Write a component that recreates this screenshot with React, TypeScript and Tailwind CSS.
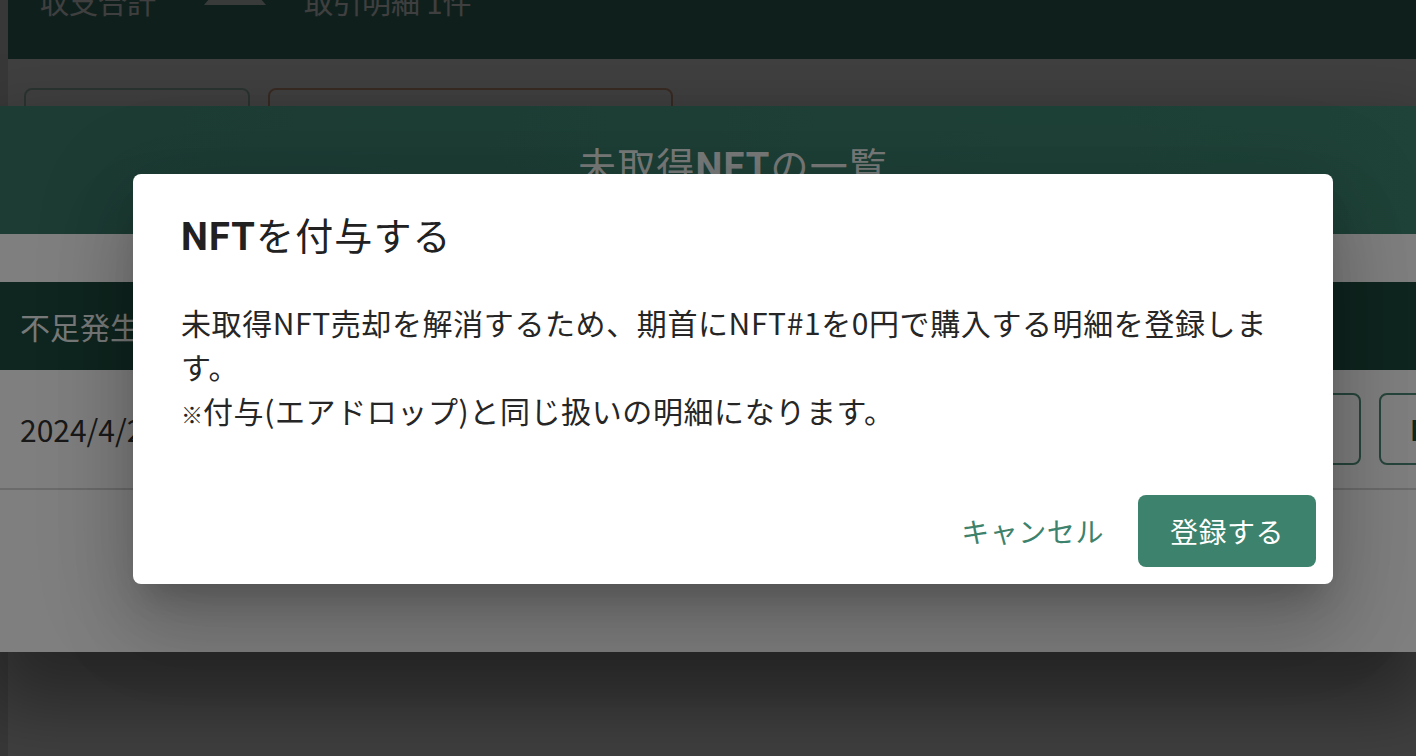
import React from 'react';

const jp = "font-['Noto_Sans_CJK_JP',sans-serif]";
const latinBold = "font-['Roboto','Noto_Sans_CJK_JP',sans-serif] font-bold";

const BasePage: React.FC = () => (
  <div className="flex h-full w-full bg-white">
    <div className="w-[8px] shrink-0 bg-[#e0e0e0]" />
    <div className="flex-1">
      <div className="h-[59px] bg-[#3e8070] overflow-hidden">
        <div className="flex items-start -mt-[14px] text-[29px] leading-[30px] text-white">
          <span className="ml-[32px]">収支合計</span>
          <svg width="62" height="36" viewBox="0 0 62 36" className="ml-[48px] -mt-[17px]">
            <path d="M31 0 L62 36 L0 36 Z" fill="#ffffff" fillOpacity="0.85" />
          </svg>
          <span className="ml-[38px]">取引明細 1件</span>
        </div>
      </div>
      <div className="flex gap-[18px] pl-[16px] pt-[29px]">
        <div className="h-[80px] w-[226px] rounded-[8px] border-2 border-[#a8cfc2]" />
        <div className="h-[80px] w-[405px] rounded-[8px] border-2 border-[#e0a889]" />
      </div>
    </div>
  </div>
);

const ListSheet: React.FC = () => (
  <div className="flex h-[546px] w-full flex-col bg-white shadow-[0_40px_70px_12px_rgba(0,0,0,0.4)]">
    <div className="flex h-[128px] shrink-0 items-center justify-center bg-gradient-to-r from-[#397868] to-[#3e8671] pb-[10px] pl-[50px]">
      <span className="text-[38px] tracking-[0.03em] text-white/95">
        未取得<span className={latinBold}>NFT</span>の一覧
      </span>
    </div>
    <div className="pt-[48px]">
      <div className="flex h-[88px] items-center bg-[#1f4a3e] px-[20px] text-[30px] text-white/95">
        不足発生数量
      </div>
      <div className="flex h-[120px] items-center border-b-2 border-[#d6d6d6] pl-[20px] text-[30px] text-[#333]">
        <span>2024/4/25 10:00</span>
        <div className="ml-auto flex shrink-0 gap-[18px] -mr-[113px]">
          <div className="flex h-[72px] w-[140px] items-center justify-center rounded-[8px] border-2 border-[#4f8a78] text-[28px] font-medium text-[#1f5f4b]">
            詳細
          </div>
          <div className="flex h-[72px] w-[150px] items-center rounded-[8px] border-2 border-[#4f8a78] pl-[29px] text-[28px] font-bold text-[#1a5443]">
            NFT付与
          </div>
        </div>
      </div>
    </div>
  </div>
);

const GrantDialog: React.FC = () => (
  <div className="w-[1200px] rounded-[8px] bg-white shadow-[0_22px_30px_-14px_rgba(0,0,0,0.2),0_48px_76px_6px_rgba(0,0,0,0.14),0_18px_92px_16px_rgba(0,0,0,0.12)]">
    <h2 className="flex h-[90px] items-center px-[48px] pt-[32px] text-[38px] tracking-[0.03em] text-[#212121]">
      <span>
        <span className={latinBold}>NFT</span>を付与する
      </span>
    </h2>
    <div className="px-[48px] pt-[36px] pb-[43px] text-[30px] leading-[44px] tracking-[0.02em] text-[#262626]">
      <p>未取得NFT売却を解消するため、期首にNFT#1を0円で購入する明細を登録します。</p>
      <p>
        <span className="text-[22px] tracking-normal">※</span>付与(エアドロップ)と同じ扱いの明細になります。
      </p>
    </div>
    <div className="flex items-center justify-end gap-[18px] p-[17px]">
      <button className="h-[72px] px-[16px] text-[28px] tracking-[0.02em] text-[#3d826c]">キャンセル</button>
      <button className="h-[72px] w-[178px] rounded-[8px] bg-[#3d826c] text-[28px] tracking-[0.02em] text-white">
        登録する
      </button>
    </div>
  </div>
);

export default function App() {
  return (
    <div className={`relative h-[756px] w-[1416px] overflow-hidden ${jp}`}>
      <BasePage />
      <div className="absolute inset-0 bg-black/50" />
      <div className="absolute inset-0 pt-[106px]">
        <ListSheet />
      </div>
      <div className="absolute inset-0 bg-black/50" />
      <div className="absolute inset-0 flex items-start justify-center pl-[50px] pt-[174px]">
        <GrantDialog />
      </div>
    </div>
  );
}
